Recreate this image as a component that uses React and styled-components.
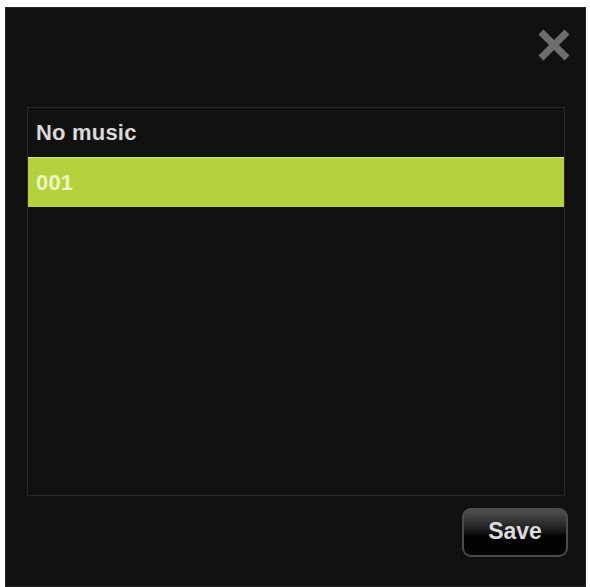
import styled, { createGlobalStyle } from "styled-components";

const GlobalStyle = createGlobalStyle`
  body {
    margin: 0;
    background: #ffffff;
    font-family: "Liberation Sans", Arial, sans-serif;
  }
`;

const Panel = styled.section`
  box-sizing: border-box;
  width: 581px;
  height: 580px;
  margin: 7px 0 0 5px;
  background: #111111;
  border: 1px solid #262626;
  display: flex;
  flex-direction: column;
`;

const Header = styled.header`
  box-sizing: border-box;
  height: 99px;
  padding: 20px 14px 0 0;
  display: flex;
  justify-content: flex-end;
  align-items: flex-start;
`;

const CloseButton = styled.button`
  width: 34px;
  height: 34px;
  padding: 0;
  border: none;
  background: none;
  cursor: pointer;
  display: flex;
`;

const List = styled.ul`
  box-sizing: border-box;
  height: 389px;
  margin: 0 20px 0 21px;
  padding: 0;
  list-style: none;
  border: 1px solid #2a2a2a;
  background: #111111;
`;

const Row = styled.li`
  box-sizing: border-box;
  height: ${(p) => (p.$first ? "49px" : "50px")};
  padding-left: 8px;
  display: flex;
  align-items: center;
  font-size: 22px;
  font-weight: bold;
  color: ${(p) => (p.$selected ? "#eef7c0" : "#d9d9d9")};
  background: ${(p) => (p.$selected ? "#b4d23e" : "transparent")};
  border-top: ${(p) => (p.$selected ? "1px solid #cfe27a" : "none")};
  letter-spacing: 0.2px;
`;

const Footer = styled.footer`
  padding: 12px 17px 0 0;
  display: flex;
  justify-content: flex-end;
`;

const SaveButton = styled.button`
  box-sizing: border-box;
  width: 106px;
  height: 49px;
  border: 2px solid #4c4c4c;
  border-radius: 9px;
  background: linear-gradient(to bottom, #505050 0%, #1c1c1c 45%, #000000 60%, #050505 100%);
  color: #dcdcdc;
  font-family: "Liberation Sans", Arial, sans-serif;
  font-size: 23px;
  font-weight: bold;
  cursor: pointer;
  display: flex;
  align-items: center;
  justify-content: center;
  padding: 0 0 2px 0;
`;

const items = ["No music", "001"];

const App = () => {
  return (
    <>
      <GlobalStyle />
      <Panel>
        <Header>
          <CloseButton aria-label="Close">
            <svg width="34" height="34" viewBox="0 0 34 34">
              <path
                d="M4 4 L30 30 M30 4 L4 30"
                stroke="#6e6e6e"
                strokeWidth="7"
                fill="none"
              />
            </svg>
          </CloseButton>
        </Header>
        <List>
          {items.map((item, i) => (
            <Row key={item} $first={i === 0} $selected={item === "001"}>
              {item}
            </Row>
          ))}
        </List>
        <Footer>
          <SaveButton>Save</SaveButton>
        </Footer>
      </Panel>
    </>
  );
};

export default App;
